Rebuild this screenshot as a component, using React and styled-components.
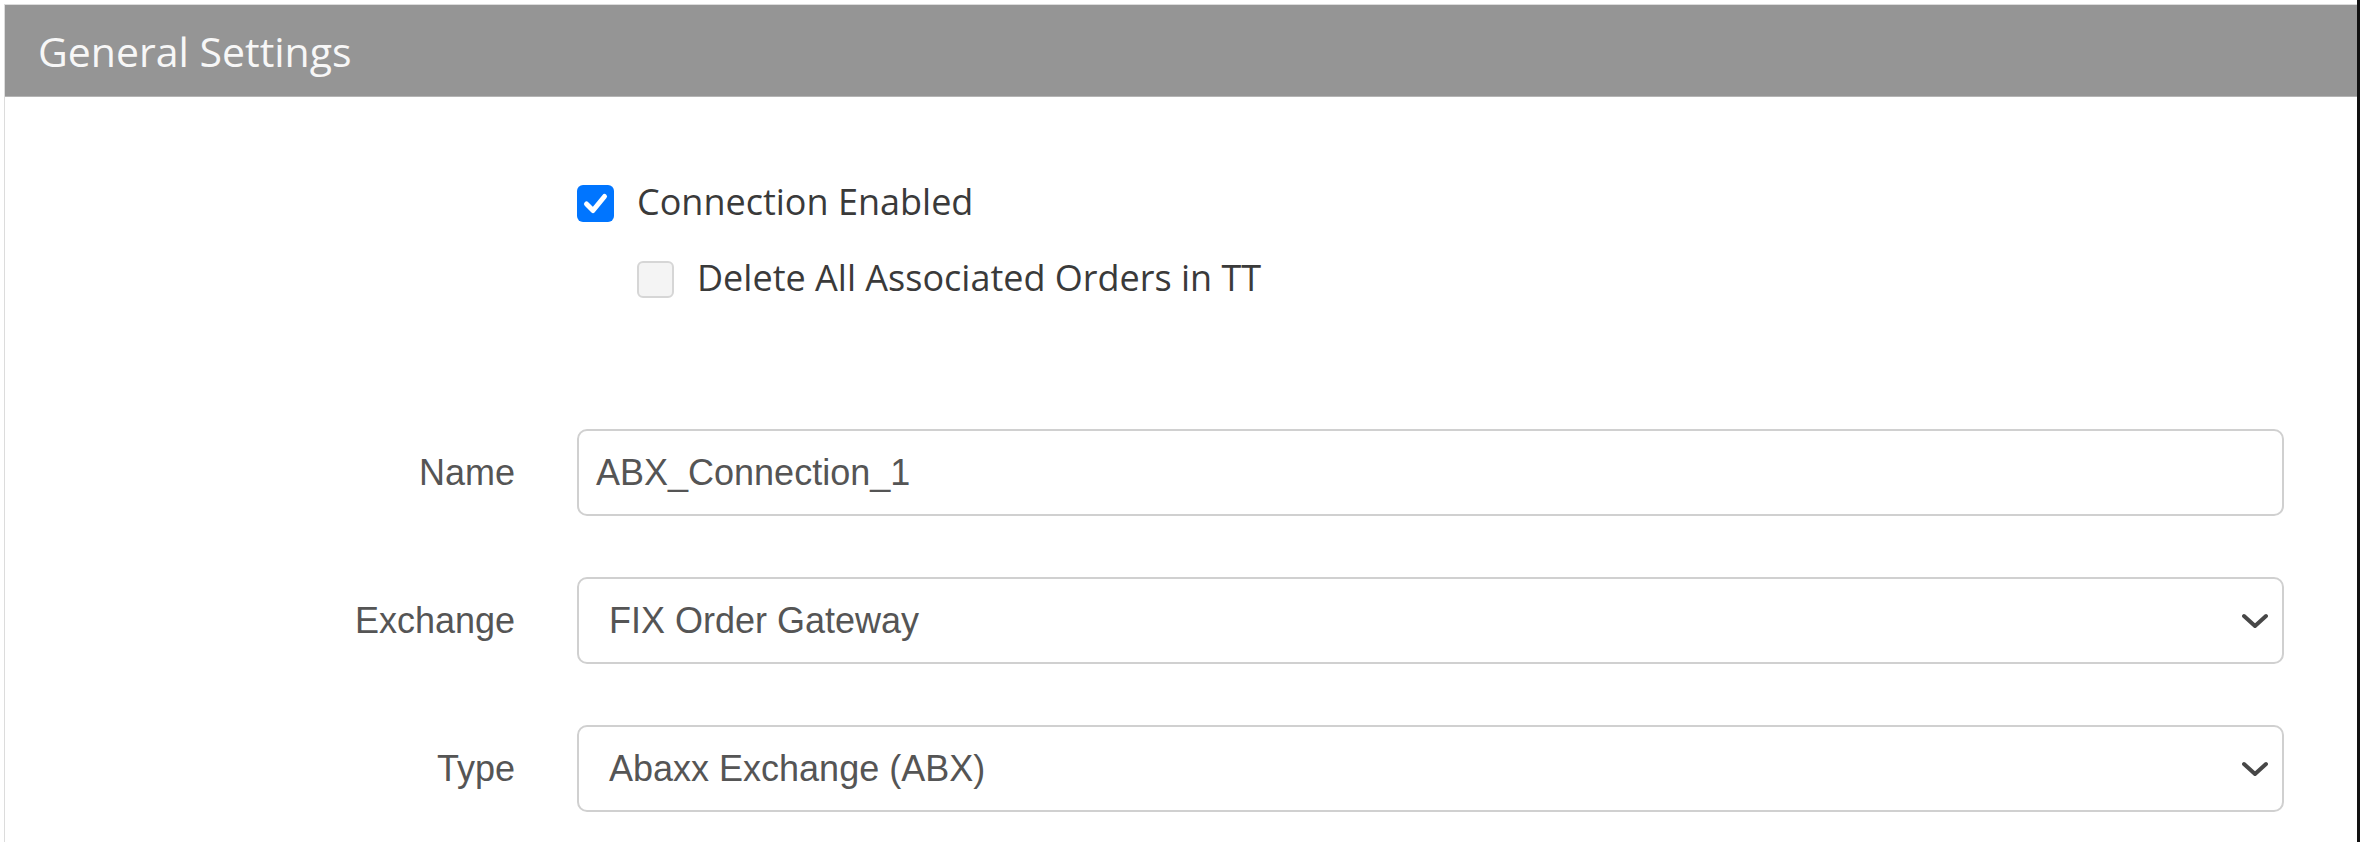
import styled, { createGlobalStyle } from "styled-components";

const GlobalStyle = createGlobalStyle`
  html, body {
    margin: 0;
    padding: 0;
    background: #ffffff;
  }
  * {
    box-sizing: border-box;
  }
`;

const checks = [
  { label: "Connection Enabled", checked: true, disabled: false, indent: 0 },
  { label: "Delete All Associated Orders in TT", checked: false, disabled: true, indent: 1 },
];

const fields = [
  { label: "Name", value: "ABX_Connection_1", kind: "input" },
  { label: "Exchange", value: "FIX Order Gateway", kind: "select" },
  { label: "Type", value: "Abaxx Exchange (ABX)", kind: "select" },
];

function Chevron() {
  return (
    <svg width="26" height="16" viewBox="0 0 26 16" fill="none">
      <polyline
        points="2,3 13,13 24,3"
        stroke="#474747"
        strokeWidth="4"
        strokeLinecap="round"
        strokeLinejoin="round"
      />
    </svg>
  );
}

function CheckMark() {
  return (
    <svg width="37" height="37" viewBox="0 0 37 37" fill="none">
      <polyline
        points="9.5,19 16,25.5 27.5,11.5"
        stroke="#ffffff"
        strokeWidth="5"
        strokeLinecap="round"
        strokeLinejoin="round"
      />
    </svg>
  );
}

export default function App() {
  return (
    <>
      <GlobalStyle />
      <Page>
        <Panel>
          <PanelHeader>General Settings</PanelHeader>
          <PanelBody>
            <Spacer />
            <CheckGroup>
              {checks.map((c) => (
                <CheckRow key={c.label} $indent={c.indent}>
                  <CheckBox $checked={c.checked} $disabled={c.disabled}>
                    {c.checked && <CheckMark />}
                  </CheckBox>
                  <CheckLabel>{c.label}</CheckLabel>
                </CheckRow>
              ))}
            </CheckGroup>
            {fields.map((f) => (
              <FieldRow key={f.label}>
                <FieldLabel>{f.label}</FieldLabel>
                <Control $select={f.kind === "select"}>
                  <span>{f.value}</span>
                  {f.kind === "select" && <Chevron />}
                </Control>
              </FieldRow>
            ))}
          </PanelBody>
        </Panel>
      </Page>
    </>
  );
}

const Page = styled.div`
  height: 100vh;
  overflow: hidden;
  padding: 4px 0 0 4px;
  border-right: 3px solid #111111;
  display: flex;
  flex-direction: column;
`;

const Panel = styled.div`
  flex: 1;
  border: 1px solid #dcdcdc;
  border-bottom: none;
  border-right: none;
  display: flex;
  flex-direction: column;
`;

const PanelHeader = styled.div`
  height: 92px;
  flex: none;
  background: #959595;
  border-bottom: 1px solid #b4b4b4;
  display: flex;
  align-items: center;
  padding-left: 33px;
  font-family: "Open Sans", "Noto Sans", sans-serif;
  font-size: 41px;
  font-weight: 400;
  color: #f7f7f7;
`;

const PanelBody = styled.div`
  display: grid;
  grid-template-columns: 510px 1fr;
  column-gap: 62px;
  padding-right: 73px;
`;

const Spacer = styled.div`
  grid-column: 1;
`;

const CheckGroup = styled.div`
  grid-column: 2;
  display: flex;
  flex-direction: column;
  gap: 39px;
  padding-top: 88px;
  padding-bottom: 131px;
`;

const CheckRow = styled.label`
  height: 37px;
  display: flex;
  align-items: center;
  gap: 23px;
  margin-left: ${(p) => p.$indent * 60}px;
`;

const CheckBox = styled.span`
  width: 37px;
  height: 37px;
  flex: none;
  border-radius: 6px;
  display: flex;
  align-items: center;
  justify-content: center;
  background: ${(p) => (p.$checked ? "#0075ff" : p.$disabled ? "#f4f4f4" : "#ffffff")};
  border: ${(p) => (p.$checked ? "none" : "2.5px solid #d6d6d6")};
`;

const CheckLabel = styled.span`
  font-family: "Open Sans", "Noto Sans", sans-serif;
  font-size: 36px;
  color: #3a3a3a;
  line-height: 1;
  padding-bottom: 4px;
`;

const FieldRow = styled.div`
  grid-column: 1 / span 2;
  display: grid;
  grid-template-columns: 510px 1fr;
  column-gap: 62px;
  align-items: center;
  margin-bottom: 61px;
`;

const FieldLabel = styled.div`
  text-align: right;
  font-family: "Liberation Sans", Arial, sans-serif;
  font-size: 36px;
  color: #555555;
`;

const Control = styled.div`
  height: 87px;
  border: 2px solid #d0d0d0;
  border-radius: 10px;
  display: flex;
  align-items: center;
  justify-content: space-between;
  padding: 0 14px 0 ${(p) => (p.$select ? "30px" : "17px")};
  font-family: "Liberation Sans", Arial, sans-serif;
  font-size: 36px;
  color: #555555;
  background: #ffffff;
`;
